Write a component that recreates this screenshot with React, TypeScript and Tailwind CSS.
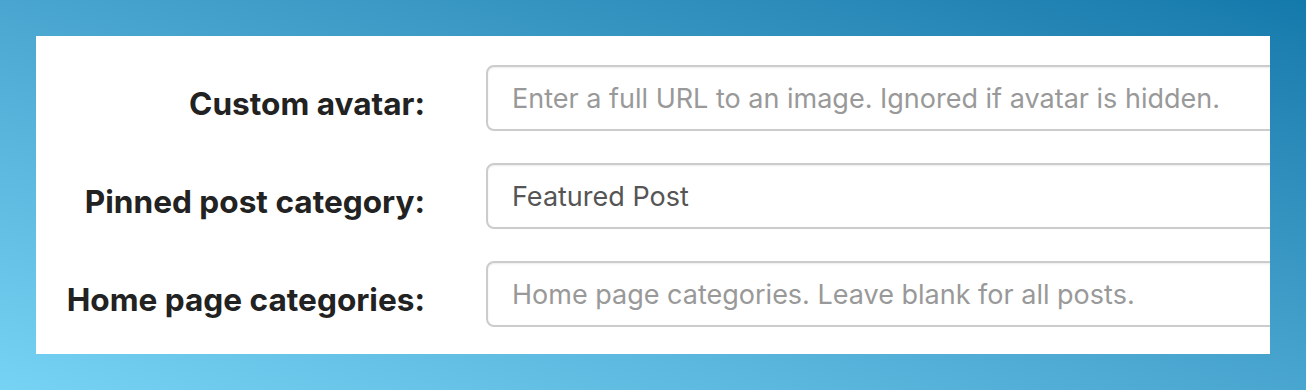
const rows = [
  { label: 'Custom avatar:', value: '', placeholder: 'Enter a full URL to an image. Ignored if avatar is hidden.' },
  { label: 'Pinned post category:', value: 'Featured Post', placeholder: '' },
  { label: 'Home page categories:', value: '', placeholder: 'Home page categories. Leave blank for all posts.' },
];

export default function App() {
  return (
    <div className="w-[1306px] h-[390px] bg-linear-to-tr from-[#76d3f4] to-[#137aab] p-[36px] font-['Inter',sans-serif]">
      <div className="h-full bg-white overflow-hidden pt-[29px] flex flex-col gap-[32px]">
        {rows.map(r => (
          <div key={r.label} className="flex items-start">
            <label className="w-[389px] shrink-0 text-right pt-[20px] text-[31.6px] leading-[38px] font-bold text-[#222]">
              {r.label}
            </label>
            <input
              readOnly
              defaultValue={r.value}
              placeholder={r.placeholder}
              className="ml-[61px] shrink-0 w-[900px] h-[66px] px-[24px] border-2 border-[#cccccc] rounded-[8px] shadow-[inset_0_1px_2px_rgba(0,0,0,0.08)] text-[27px] text-[#555] placeholder:text-[#999] outline-none"
            />
          </div>
        ))}
      </div>
    </div>
  );
}
